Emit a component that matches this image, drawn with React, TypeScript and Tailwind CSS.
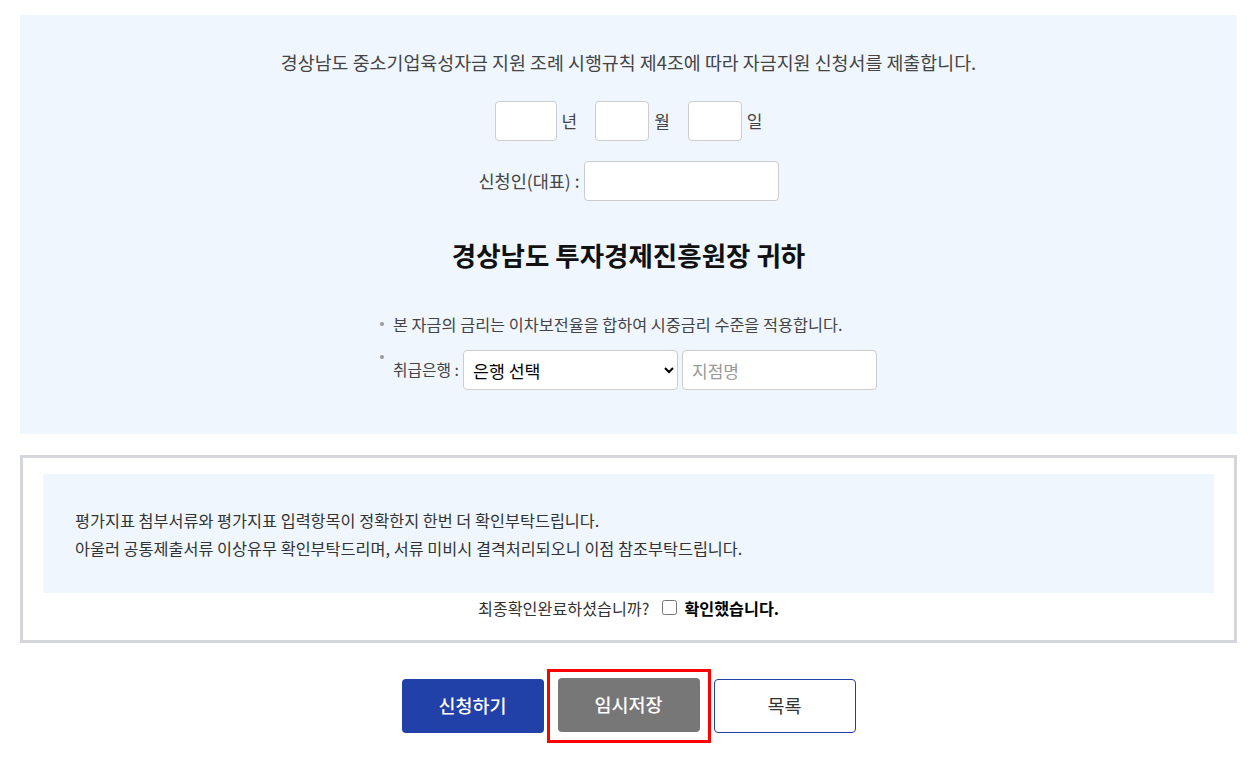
import React from 'react';

const font = { fontFamily: '"Noto Sans CJK KR", "Noto Sans", sans-serif' };

function DateBox({ width, label }: { width: string; label: string }) {
    return (
        <div className="flex items-center">
            <input type="text" className={`${width} h-[40px] bg-white border border-[#cccccc] rounded-[4px]`} />
            <span className="ml-[5px] text-[17px] text-[#444]">{label}</span>
        </div>
    );
}

export default function App() {
    return (
        <div className="min-h-screen bg-white px-[20px] pt-[15px] text-[#444]" style={font}>
            {/* 신청서 상단 */}
            <section className="bg-[#eff6fe] pt-[34px] pb-[44px] flex flex-col items-center">
                <p className="text-[18.4px] leading-[26px] text-[#444]">
                    경상남도 중소기업육성자금 지원 조례 시행규칙 제4조에 따라 자금지원 신청서를 제출합니다.
                </p>

                <div className="mt-[26px] flex items-center gap-[18px]">
                    <DateBox width="w-[62px]" label="년" />
                    <DateBox width="w-[54px]" label="월" />
                    <DateBox width="w-[54px]" label="일" />
                </div>

                <div className="mt-[20px] flex items-center">
                    <span className="text-[17.5px] mr-[4px]">신청인(대표) :</span>
                    <input type="text" className="w-[195px] h-[40px] bg-white border border-[#cccccc] rounded-[4px]" />
                </div>

                <h2 className="mt-[35px] text-[26.5px] leading-[38px] font-bold text-[#111]">
                    경상남도 투자경제진흥원장 귀하
                </h2>

                <ul className="mt-[38px] flex flex-col">
                    <li className="flex items-center text-[16.3px] leading-[24px]">
                        <span className="w-[4px] h-[4px] rounded-full bg-[#999] mr-[9px]" />
                        본 자금의 금리는 이차보전율을 합하여 시중금리 수준을 적용합니다.
                    </li>
                    <li className="mt-[14px] flex items-start">
                        <span className="w-[4px] h-[4px] rounded-full bg-[#999] mr-[9px] mt-[5px]" />
                        <span className="text-[15.8px] leading-[40px] mr-[4px]">취급은행 :</span>
                        <select className="w-[215px] h-[40px] bg-white border border-[#cccccc] rounded-[4px] pl-[5px] text-[17.3px] text-black">
                            <option>은행 선택</option>
                        </select>
                        <input
                            type="text"
                            placeholder="지점명"
                            className="ml-[4px] w-[195px] h-[40px] bg-white border border-[#cccccc] rounded-[4px] px-[9px] text-[17px] placeholder:text-[#999]"
                        />
                    </li>
                </ul>
            </section>

            {/* 최종 확인 */}
            <section className="mt-[21px] border-[3px] border-[#d5d6db] px-[20px] pt-[16px] pb-[17px]">
                <div className="bg-[#eff6fe] h-[119px] pl-[32px] flex flex-col justify-center text-[16.3px] leading-[28px] text-[#333]">
                    <p>평가지표 첨부서류와 평가지표 입력항목이 정확한지 한번 더 확인부탁드립니다.</p>
                    <p>아울러 공통제출서류 이상유무 확인부탁드리며, 서류 미비시 결격처리되오니 이점 참조부탁드립니다.</p>
                </div>
                <div className="h-[30px] flex items-center justify-center text-[16.2px] text-[#333]">
                    <span>최종확인완료하셨습니까?</span>
                    <label className="ml-[13px] flex items-center gap-[7px]">
                        <input type="checkbox" className="w-[15px] h-[15px]" />
                        <span className="font-bold text-black">확인했습니다.</span>
                    </label>
                </div>
            </section>

            {/* 버튼 */}
            <div className="mt-[26px] flex items-center justify-center gap-[3px]">
                <button className="w-[142px] h-[54px] rounded-[4px] bg-[#2140a8] text-white text-[18.5px] font-medium">
                    신청하기
                </button>
                <div className="border-[3px] border-[#ff0000] px-[8px] pt-[6px] pb-[8px]">
                    <button className="w-[142px] h-[54px] rounded-[4px] bg-[#777777] text-white text-[18.5px] font-medium">
                        임시저장
                    </button>
                </div>
                <button className="w-[142px] h-[54px] rounded-[4px] bg-white border border-[#2140a8] text-[#333] text-[18.5px]">
                    목록
                </button>
            </div>
        </div>
    );
}
